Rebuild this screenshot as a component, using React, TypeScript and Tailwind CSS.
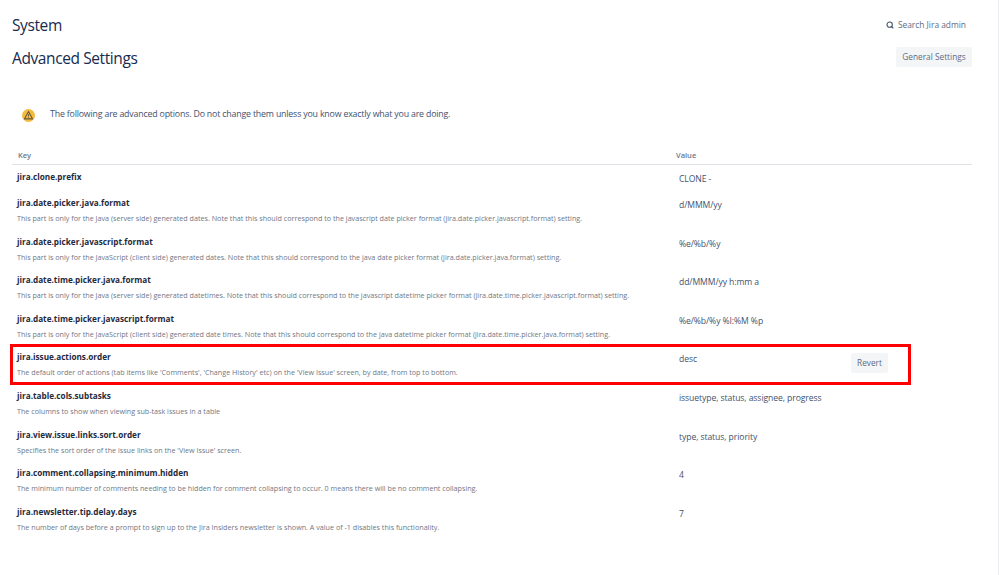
import { Search } from "lucide-react";

const rows = [
  { key: "jira.clone.prefix", desc: "", value: "CLONE -" },
  {
    key: "jira.date.picker.java.format",
    desc: "This part is only for the Java (server side) generated dates. Note that this should correspond to the javascript date picker format (jira.date.picker.javascript.format) setting.",
    value: "d/MMM/yy",
  },
  {
    key: "jira.date.picker.javascript.format",
    desc: "This part is only for the JavaScript (client side) generated dates. Note that this should correspond to the java date picker format (jira.date.picker.java.format) setting.",
    value: "%e/%b/%y",
  },
  {
    key: "jira.date.time.picker.java.format",
    desc: "This part is only for the Java (server side) generated datetimes. Note that this should correspond to the javascript datetime picker format (jira.date.time.picker.javascript.format) setting.",
    value: "dd/MMM/yy h:mm a",
  },
  {
    key: "jira.date.time.picker.javascript.format",
    desc: "This part is only for the JavaScript (client side) generated date times. Note that this should correspond to the java datetime picker format (jira.date.time.picker.java.format) setting.",
    value: "%e/%b/%y %I:%M %p",
  },
  {
    key: "jira.issue.actions.order",
    desc: "The default order of actions (tab items like 'Comments', 'Change History' etc) on the 'View Issue' screen, by date, from top to bottom.",
    value: "desc",
    revert: true,
  },
  {
    key: "jira.table.cols.subtasks",
    desc: "The columns to show when viewing sub-task issues in a table",
    value: "issuetype, status, assignee, progress",
  },
  {
    key: "jira.view.issue.links.sort.order",
    desc: "Specifies the sort order of the issue links on the 'View Issue' screen.",
    value: "type, status, priority",
  },
  {
    key: "jira.comment.collapsing.minimum.hidden",
    desc: "The minimum number of comments needing to be hidden for comment collapsing to occur. 0 means there will be no comment collapsing.",
    value: "4",
  },
  {
    key: "jira.newsletter.tip.delay.days",
    desc: "The number of days before a prompt to sign up to the Jira Insiders newsletter is shown. A value of -1 disables this functionality.",
    value: "7",
  },
];

export default function App() {
  return (
    <div className="h-[575px] w-[999px] overflow-hidden border-r border-[#eceef1] bg-white font-['Open_Sans',sans-serif] text-[#172b4d]">
      <div className="pl-3 pr-[26px] pt-[14px]">
        <div className="flex h-[22px] items-center justify-between">
          <h1 className="text-[15.5px] leading-[22px] font-normal tracking-[-0.4px]">System</h1>
          <div className="flex items-center gap-[4px] pr-[6px] text-[8.4px] text-[#5e6c84]">
            <Search size={8} strokeWidth={3.2} className="text-[#42526e]" />
            <span>Search Jira admin</span>
          </div>
        </div>

        <div className="mt-[11px] flex items-start justify-between">
          <h2 className="text-[15.5px] leading-[22px] font-normal tracking-[-0.4px]">Advanced Settings</h2>
          <button className="h-5 w-[76px] rounded-[2px] bg-[#f4f5f7] text-[8.3px] text-[#5e6c84]">
            General Settings
          </button>
        </div>

        <div className="mt-[38px] flex h-4 items-center pl-[10px]">
          <svg width="13" height="13" viewBox="0 0 13 13">
            <circle cx="6.5" cy="6.5" r="6.5" fill="#f5bb3d" />
            <path d="M6.5 2.4 L10.6 9.9 H2.4 Z" fill="none" stroke="#6b5a3a" strokeWidth="1.1" strokeLinejoin="round" />
            <path d="M6.5 5.2 V7.4 M6.5 8.2 V8.9" stroke="#6b5a3a" strokeWidth="1" />
          </svg>
          <p className="ml-[15px] text-[8.8px] tracking-[-0.18px] text-[#42526e]">
            The following are advanced options. Do not change them unless you know exactly what you are doing.
          </p>
        </div>

        <div className="mt-[28px] flex h-[14px] items-center border-b border-[#dfe1e6] pb-[3px] text-[7.5px] font-semibold text-[#6b778c]">
          <span className="w-[664px] pl-[6px]">Key</span>
          <span>Value</span>
        </div>

        <div className="relative">
          {rows.map((row, i) => (
            <div key={row.key} className={`flex pl-[5px] ${i === 0 ? "h-[28px] pt-[5px]" : "h-[38.6px] pt-[3px]"}`}>
              <div className="w-[662px] shrink-0">
                <div className="text-[8.2px] leading-[14px] font-bold text-[#1f2a3d]">{row.key}</div>
                {row.desc && (
                  <div className="mt-[2px] text-[7.18px] leading-[12px] whitespace-nowrap text-[#6f7785]">{row.desc}</div>
                )}
              </div>
              <div className="flex w-[209px] items-start justify-between">
                <span className="pt-[3px] text-[8.6px] leading-[12px] tracking-[-0.08px] text-[#42526e]">{row.value}</span>
                {row.revert && (
                  <button className="mt-[3px] h-5 w-[37px] rounded-[2px] bg-[#f4f5f7] text-[8.3px] text-[#5e6c84]">
                    Revert
                  </button>
                )}
              </div>
            </div>
          ))}
          <div className="pointer-events-none absolute top-[179px] left-[-2px] h-[41px] w-[901px] border-[3px] border-[#ff0000]" />
        </div>
      </div>
    </div>
  );
}
